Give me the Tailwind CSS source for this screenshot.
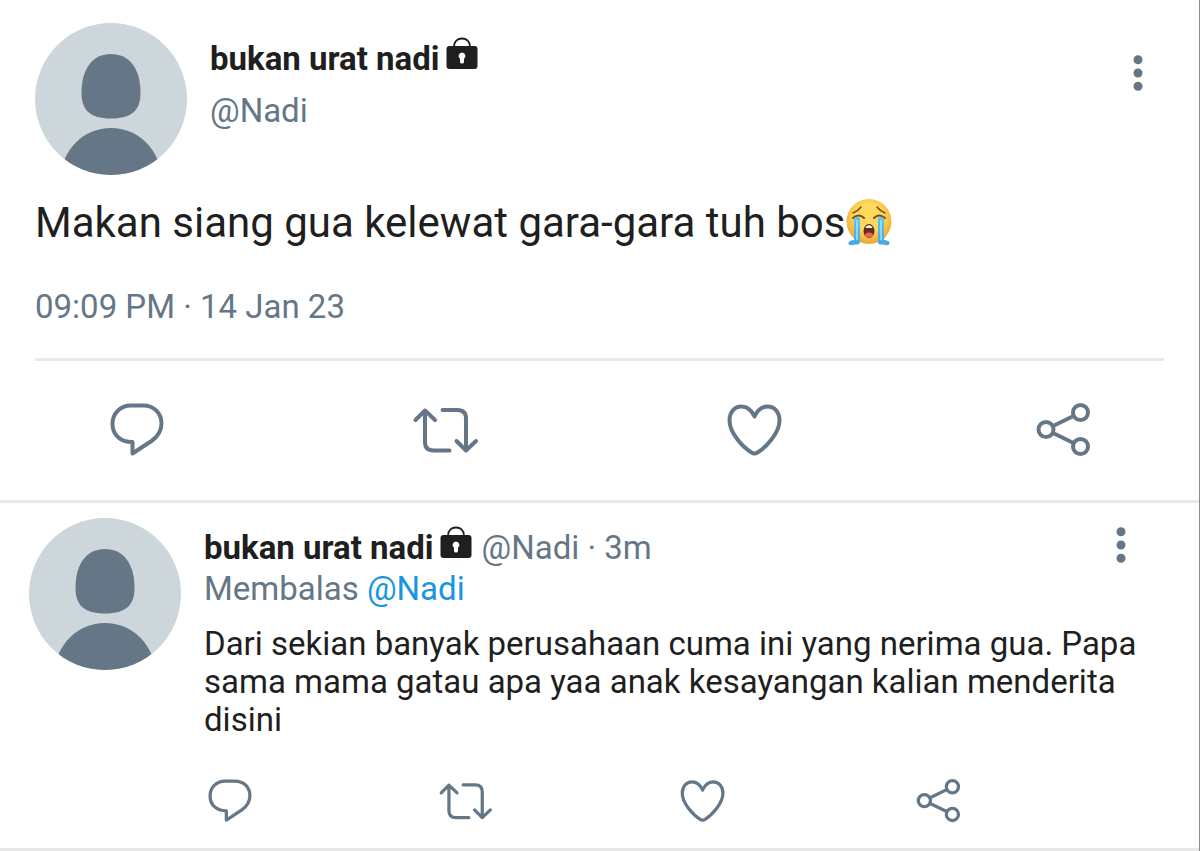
<!DOCTYPE html>
<html lang="id">
<head>
  <meta charset="UTF-8">
  <meta name="viewport" content="width=device-width, initial-scale=1.0">
  <title>bukan urat nadi</title>
  <script src="https://cdn.jsdelivr.net/npm/@tailwindcss/browser@4"></script>
</head>
<body class="bg-white font-['Roboto',sans-serif] text-[#1f1f1f]">

<!-- Shared icons -->
<svg class="hidden">
  <symbol id="avatar" viewBox="0 0 152 152">
    <rect width="152" height="152" fill="#ccd6db"/>
    <path fill="#657786" d="M76 31C94 31 105.500 45 105.500 70C105.500 87 97 95.500 76 95.500S46.500 87 46.500 70C46.500 45 58 31 76 31Z"/>
    <circle cx="76" cy="155" r="50" fill="#657786"/>
  </symbol>
  <symbol id="lock" viewBox="0 0 32 32">
    <path fill="none" stroke="#1f1f1f" stroke-width="2" d="M8 10C8 4.500 11.500 1.500 16 1.500S24 4.500 24 10"/>
    <rect x="0.500" y="9" width="31" height="23" rx="3" fill="#1f1f1f"/>
    <path fill="#fff" d="M16 15.500a3.500 3.500 0 0 1 2 6.300V25q0 1.500-2 1.500t-2-1.500v-3.200a3.500 3.500 0 0 1 2-6.300Z"/>
  </symbol>
  <symbol id="dots" viewBox="0 0 12 38">
    <circle cx="6" cy="5.800" r="4.500"/>
    <circle cx="6" cy="19" r="4.500"/>
    <circle cx="6" cy="32.200" r="4.500"/>
  </symbol>
  <symbol id="reply" viewBox="0 0 64 64">
    <path d="M26 7.500H38C49 7.500 56.500 15 56.500 25.500C56.500 32.500 53.500 38 46.500 43L27.500 55.500V44C15 44 7.500 36.500 7.500 26C7.500 15.500 15 7.500 26 7.500Z"/>
  </symbol>
  <symbol id="retweet" viewBox="0 0 64 64" overflow="visible">
    <path d="M1.500 22L11 12.500L21 22M11 12.500V44Q11 52.500 19.500 52.500H35.500M28.500 12H43.500Q52 12 52 20.500V52.500M42.500 43L52 52.500L62 43"/>
  </symbol>
  <symbol id="heart" viewBox="0 0 64 64">
    <path d="M31.500 18.500C28 11 23.500 8.500 18.500 8.500C11.500 8.500 6.500 14 6.500 22.500C6.500 35 20 49.500 28.500 54.500Q31.500 56.500 34.500 54.500C43 49.500 56.500 35 56.500 22.500C56.500 14 51.500 8.500 44.500 8.500C39.500 8.500 35 11 31.500 18.500Z"/>
  </symbol>
  <symbol id="share" viewBox="0 0 64 64">
    <circle cx="14" cy="31.500" r="7.500"/>
    <circle cx="48.500" cy="14.500" r="7.500"/>
    <circle cx="48.500" cy="48.500" r="7.500"/>
    <path d="M21 28L41.500 18M21 35L41.500 45"/>
  </symbol>
</svg>

<main class="min-h-screen border-r border-[#8a8a8a]">

  <!-- Tweet -->
  <article class="border-b-3 border-[#e8e8e8] pt-[23px] pb-[38px]">
    <div class="px-[35px]">
      <header class="flex gap-[23px]">
        <svg class="size-[152px] shrink-0 rounded-full"><use href="#avatar"/></svg>
        <div class="pt-[10px]">
          <div class="flex items-center gap-1.5 text-[33px] leading-[52px] font-bold">
            <h1>bukan urat nadi</h1>
            <svg class="size-8 mb-3" role="img" aria-label="Terkunci"><use href="#lock"/></svg>
          </div>
          <a href="#" class="block text-[33px] leading-[52px] text-[#657786]">@Nadi</a>
        </div>
        <button type="button" aria-label="Menu" class="ml-auto mt-[31px] flex h-[38px] w-[52px] justify-center fill-[#657786]">
          <svg class="h-[38px] w-3"><use href="#dots"/></svg>
        </button>
      </header>

      <p class="mt-6 flex items-center text-[42px] leading-[48px]">
        <span>Makan siang gua kelewat gara-gara tuh bos</span>
        <svg class="size-12" viewBox="0 0 48 48" role="img" aria-label="Menangis">
          <defs>
            <radialGradient id="face" cx="50%" cy="40%" r="60%">
              <stop offset="0.500" stop-color="#fdda5c"/>
              <stop offset="1" stop-color="#eda52f"/>
            </radialGradient>
            <linearGradient id="tear" x1="0" y1="0" x2="0" y2="1">
              <stop offset="0" stop-color="#62c3ef"/>
              <stop offset="1" stop-color="#45a9de"/>
            </linearGradient>
          </defs>
          <circle cx="24" cy="22.500" r="22.500" fill="url(#face)"/>
          <g fill="none" stroke="#79491b" stroke-width="1.500" stroke-linecap="round">
            <path d="M8 14Q13 12 16 8M32 8Q35 12 40 14"/>
            <path stroke-width="2" d="M8 19Q14 14 19 19M29 19Q34 14 40 19"/>
          </g>
          <path fill="url(#tear)" d="M9 19Q12.500 17 15 19V43Q15 46 10 45.500Q3 47.500 3.500 43.500Q4 41.500 9 41Z"/>
          <path fill="url(#tear)" d="M39 19Q35.500 17 33 19V43Q33 46 38 45.500Q45 47.500 44.500 43.500Q44 41.500 39 41Z"/>
          <path fill="none" stroke="#a5e2f8" stroke-width="1.500" d="M12 21V41M36 21V41"/>
          <ellipse cx="24" cy="32" rx="5.500" ry="7" fill="#6a2a18"/>
          <ellipse cx="24" cy="36" rx="4" ry="2.500" fill="#e8655a"/>
          <path fill="#fff" d="M20.500 28Q24 24.500 27.500 28L27 29H21Z"/>
        </svg>
      </p>
      <time class="mt-10 block text-[33px] leading-[40px] text-[#657786]">09:09 PM · 14 Jan 23</time>
      <hr class="mt-[31px] border-t-3 border-[#e8e8e8]">
    </div>

    <div class="mt-[37px] flex justify-between pr-[103px] pl-[105px] fill-none stroke-[#657786] stroke-4">
      <button type="button" aria-label="Balas"><svg class="size-16" stroke-linecap="round" stroke-linejoin="round"><use href="#reply"/></svg></button>
      <button type="button" aria-label="Retweet"><svg class="size-16 overflow-visible" stroke-linecap="round" stroke-linejoin="round"><use href="#retweet"/></svg></button>
      <button type="button" aria-label="Suka"><svg class="size-16" stroke-linecap="round" stroke-linejoin="round"><use href="#heart"/></svg></button>
      <button type="button" aria-label="Bagikan"><svg class="size-16"><use href="#share"/></svg></button>
    </div>
  </article>

  <!-- Reply -->
  <article class="flex gap-[23px] border-b-3 border-[#e8e8e8] pt-[15px] pr-[52px] pb-[21px] pl-[29px]">
    <svg class="size-[152px] shrink-0 rounded-full"><use href="#avatar"/></svg>
    <div class="min-w-0 flex-1 pt-[10px] text-[33px]">
      <header class="flex h-[41px] leading-[40px]">
        <h2 class="font-bold">bukan urat nadi</h2>
        <svg class="-mt-0.5 ml-1.5 size-8" role="img" aria-label="Terkunci"><use href="#lock"/></svg>
        <span class="ml-2.5 text-[#657786]">@Nadi · 3m</span>
        <button type="button" aria-label="Menu" class="-mt-0.5 ml-auto flex h-[38px] w-[52px] justify-center fill-[#657786]">
          <svg class="h-[38px] w-3"><use href="#dots"/></svg>
        </button>
      </header>
      <p class="leading-[40px] text-[#657786]">Membalas <a href="#" class="text-[#1b95e0]">@Nadi</a></p>
      <p class="mt-4 leading-[38px]">Dari sekian banyak perusahaan cuma ini yang nerima gua. Papa sama mama gatau apa yaa anak kesayangan kalian menderita disini</p>

      <div class="mt-9 flex justify-between pr-[182px] fill-none stroke-[#657786] stroke-4">
        <button type="button" aria-label="Balas"><svg class="size-[52px]" stroke-linecap="round" stroke-linejoin="round"><use href="#reply"/></svg></button>
        <button type="button" aria-label="Retweet"><svg class="size-[52px] overflow-visible" stroke-linecap="round" stroke-linejoin="round"><use href="#retweet"/></svg></button>
        <button type="button" aria-label="Suka"><svg class="size-[52px]" stroke-linecap="round" stroke-linejoin="round"><use href="#heart"/></svg></button>
        <button type="button" aria-label="Bagikan"><svg class="size-[52px]"><use href="#share"/></svg></button>
      </div>
    </div>
  </article>

</main>
</body>
</html>
